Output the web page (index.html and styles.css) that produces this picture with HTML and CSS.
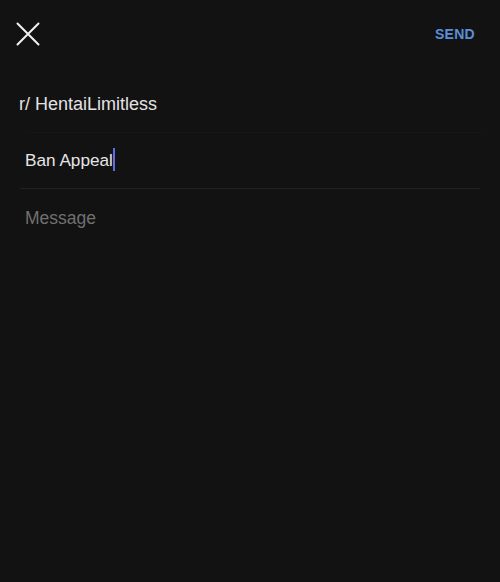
FILE: index.html
```html
<!DOCTYPE html>
<html>
<head>
<meta charset="utf-8">
<link rel="stylesheet" href="styles.css">
</head>
<body>
<div class="screen">
  <header class="top-bar">
    <svg class="close-icon" width="24" height="24" viewBox="0 0 24 24">
      <path d="M1.5 1.5 L22.5 22.5 M22.5 1.5 L1.5 22.5" stroke="#f2f2f2" stroke-width="2" stroke-linecap="round" fill="none"/>
    </svg>
    <span class="send">SEND</span>
  </header>
  <div class="subreddit">r/ HentaiLimitless</div>
  <div class="faint-line"></div>
  <div class="title-row"><span class="title-text">Ban Appeal</span><span class="caret"></span></div>
  <div class="separator"></div>
  <div class="message">Message</div>
</div>
</body>
</html>
```

FILE: styles.css
```css
html, body {
  margin: 0;
  padding: 0;
  background: #121212;
}
body {
  font-family: "Liberation Sans", Arial, sans-serif;
  color: #e4e4e4;
}
.screen {
  width: 500px;
  height: 582px;
  background: #121212;
}
.top-bar {
  display: flex;
  justify-content: space-between;
  align-items: flex-start;
  padding: 22px 25px 0 16px;
  height: 24px;
}
.close-icon {
  display: block;
}
.send {
  font-size: 14px;
  font-weight: bold;
  line-height: 24px;
  color: #5b8fd6;
  letter-spacing: 0.3px;
}
.subreddit {
  margin-top: 46px;
  padding-left: 19px;
  font-size: 18px;
  line-height: 24px;
  padding-bottom: 16px;
  color: #e2e2e2;
}
.faint-line {
  height: 1px;
  margin: 0 17px 0 28px;
  background: #161616;
}
.title-row {
  padding: 15px 0 16px 25px;
  font-size: 17.2px;
  line-height: 24px;
  height: 24px;
  color: #e6e6e6;
}
.caret {
  display: inline-block;
  width: 2px;
  height: 23px;
  vertical-align: top;
  background: #5a6ce6;
  margin-left: 0;
}
.separator {
  height: 1px;
  margin: 0 20px;
  background: #222222;
}
.message {
  padding: 17px 0 0 25px;
  font-size: 17.5px;
  line-height: 24px;
  color: #707070;
}
```
